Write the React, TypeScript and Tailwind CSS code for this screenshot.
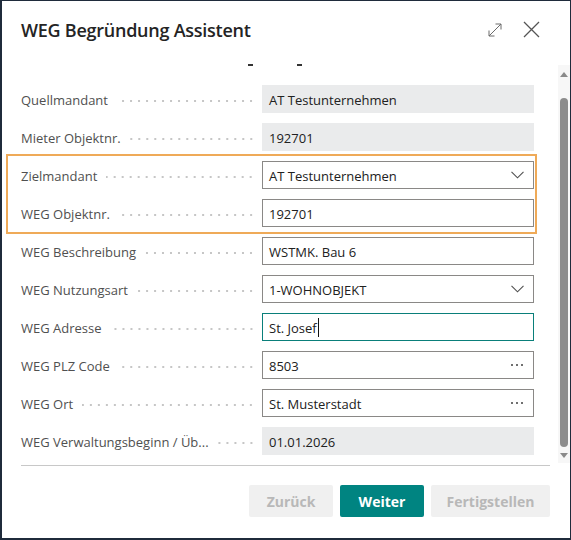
import React from 'react';

type Kind = 'readonly' | 'text' | 'focus' | 'select' | 'lookup';

interface Row {
  label: string;
  value: string;
  kind: Kind;
}

const rowsTop: Row[] = [
  { label: 'Quellmandant', value: 'AT Testunternehmen', kind: 'readonly' },
  { label: 'Mieter Objektnr.', value: '192701', kind: 'readonly' },
];

const rowsMarked: Row[] = [
  { label: 'Zielmandant', value: 'AT Testunternehmen', kind: 'select' },
  { label: 'WEG Objektnr.', value: '192701', kind: 'text' },
];

const rowsBottom: Row[] = [
  { label: 'WEG Beschreibung', value: 'WSTMK. Bau 6', kind: 'text' },
  { label: 'WEG Nutzungsart', value: '1-WOHNOBJEKT', kind: 'select' },
  { label: 'WEG Adresse', value: 'St. Josef', kind: 'focus' },
  { label: 'WEG PLZ Code', value: '8503', kind: 'lookup' },
  { label: 'WEG Ort', value: 'St. Musterstadt', kind: 'lookup' },
  { label: 'WEG Verwaltungsbeginn / Üb...', value: '01.01.2026', kind: 'readonly' },
];

const Chevron = () => (
  <svg width="13" height="8" viewBox="0 0 13 8" fill="none" className="mb-[3px] shrink-0">
    <path d="M0.5 0.8 L6.5 6.8 L12.5 0.8" stroke="#505050" strokeWidth="1.1" />
  </svg>
);

const Dots = () => (
  <span className="mb-[3px] flex shrink-0 gap-[3px] pr-[1px]">
    <span className="h-[2px] w-[2px] rounded-full bg-[#404040]" />
    <span className="h-[2px] w-[2px] rounded-full bg-[#404040]" />
    <span className="h-[2px] w-[2px] rounded-full bg-[#404040]" />
  </span>
);

// text is nudged down with pt-[3px], the way the original renders it
const Field: React.FC<{ value: string; kind: Kind }> = ({ value, kind }) => {
  if (kind === 'readonly') {
    return (
      <div className="flex h-[28px] items-center bg-[#eaebec] px-[7px] pt-[3px] text-[#212121]">{value}</div>
    );
  }
  const border = kind === 'focus' ? 'border-[#0a7f7a]' : 'border-[#8a8886]';
  return (
    <div className={`flex h-[28px] items-center justify-between border bg-white pl-[6px] pr-[9px] pt-[3px] text-[#212121] ${border}`}>
      <span className="flex items-center">
        {value}
        {kind === 'focus' && <span className="mb-[2px] ml-[1px] h-[19px] w-[1px] bg-[#111]" />}
      </span>
      {kind === 'select' && <Chevron />}
      {kind === 'lookup' && <Dots />}
    </div>
  );
};

const FormRow: React.FC<{ row: Row }> = ({ row }) => (
  <div className="grid grid-cols-[241px_272px] items-center">
    <div className="flex min-w-0 items-center pr-[7px] pt-[3px]">
      <span className="shrink-0 whitespace-nowrap text-[#505050]">{row.label}</span>
      <span className="ml-[9px] h-[4px] flex-1 bg-[radial-gradient(circle,#c6c6c6_0.9px,transparent_1.3px)] bg-[length:8px_4px] bg-right bg-repeat-x" />
    </div>
    <Field value={row.value} kind={row.kind} />
  </div>
);

export default function App() {
  return (
    <div
      className="flex h-[540px] w-[571px] flex-col overflow-hidden border-b-2 border-l-2 border-r border-t border-[#1f2b3b] bg-white text-[13px]"
      style={{ fontFamily: '"Open Sans", "Noto Sans", sans-serif' }}
    >
      {/* header */}
      <div className="flex h-[57px] shrink-0 items-center justify-between pl-[19px] pr-[30px]">
        <h1 className="pt-[2px] text-[18px] font-semibold tracking-[-0.25px] text-[#242424]">WEG Begründung Assistent</h1>
        <div className="flex items-center gap-[20px]">
          <svg width="16" height="16" viewBox="0 0 16 16" fill="none" stroke="#6b6b6b" strokeWidth="1">
            <path d="M2 14 L14 2 M8.5 2 H14 V7.5 M2 8.5 V14 H7.5" />
          </svg>
          <svg width="17" height="17" viewBox="0 0 17 17" fill="none" stroke="#555" strokeWidth="1.3">
            <path d="M1 1 L16 16 M16 1 L1 16" />
          </svg>
        </div>
      </div>

      {/* body */}
      <div className="flex h-[407px] shrink-0">
        <div className="flex-1 overflow-hidden">
          <div className="ml-[246px] mt-[6px] flex h-[2px] gap-[44px]">
            <span className="h-[2px] w-[5px] bg-[#333]" />
            <span className="h-[2px] w-[5px] bg-[#333]" />
          </div>
          <div className="ml-[19px] mt-[19px] flex w-[513px] flex-col gap-[10px]">
            {rowsTop.map((r) => (
              <FormRow key={r.label} row={r} />
            ))}
            <div className="-my-[7px] -ml-[15px] flex w-[531px] flex-col gap-[10px] border-2 border-[#efaa58] py-[5px] pl-[13px] pr-[1px]">
              {rowsMarked.map((r) => (
                <FormRow key={r.label} row={r} />
              ))}
            </div>
            {rowsBottom.map((r) => (
              <FormRow key={r.label} row={r} />
            ))}
          </div>
        </div>
        {/* scrollbar */}
        <div className="mt-[7px] flex h-[398px] w-[12px] shrink-0 flex-col items-center bg-[#f7f7f7]">
          <div className="mt-[7px] h-0 w-0 border-x-[4px] border-b-[5px] border-x-transparent border-b-[#8a8a8a]" />
          <div className="mt-[21px] h-[349px] w-[8px] rounded-full bg-[#8c8c8c]" />
          <div className="mt-[6px] h-0 w-0 border-x-[4px] border-t-[5px] border-x-transparent border-t-[#8a8a8a]" />
        </div>
      </div>

      {/* footer */}
      <div className="ml-[19px] mr-[20px] border-t border-[#c8c8c8] pt-[19px]">
        <div className="flex justify-end gap-[7px] text-[14px] font-bold">
          <button className="h-[32px] w-[84px] rounded-[2px] bg-[#f0f0f0] text-[#b8b8b8]">Zurück</button>
          <button className="h-[32px] w-[84px] rounded-[2px] bg-[#008481] text-white">Weiter</button>
          <button className="h-[32px] w-[119px] rounded-[2px] bg-[#f0f0f0] text-[#b8b8b8]">Fertigstellen</button>
        </div>
      </div>
    </div>
  );
}
